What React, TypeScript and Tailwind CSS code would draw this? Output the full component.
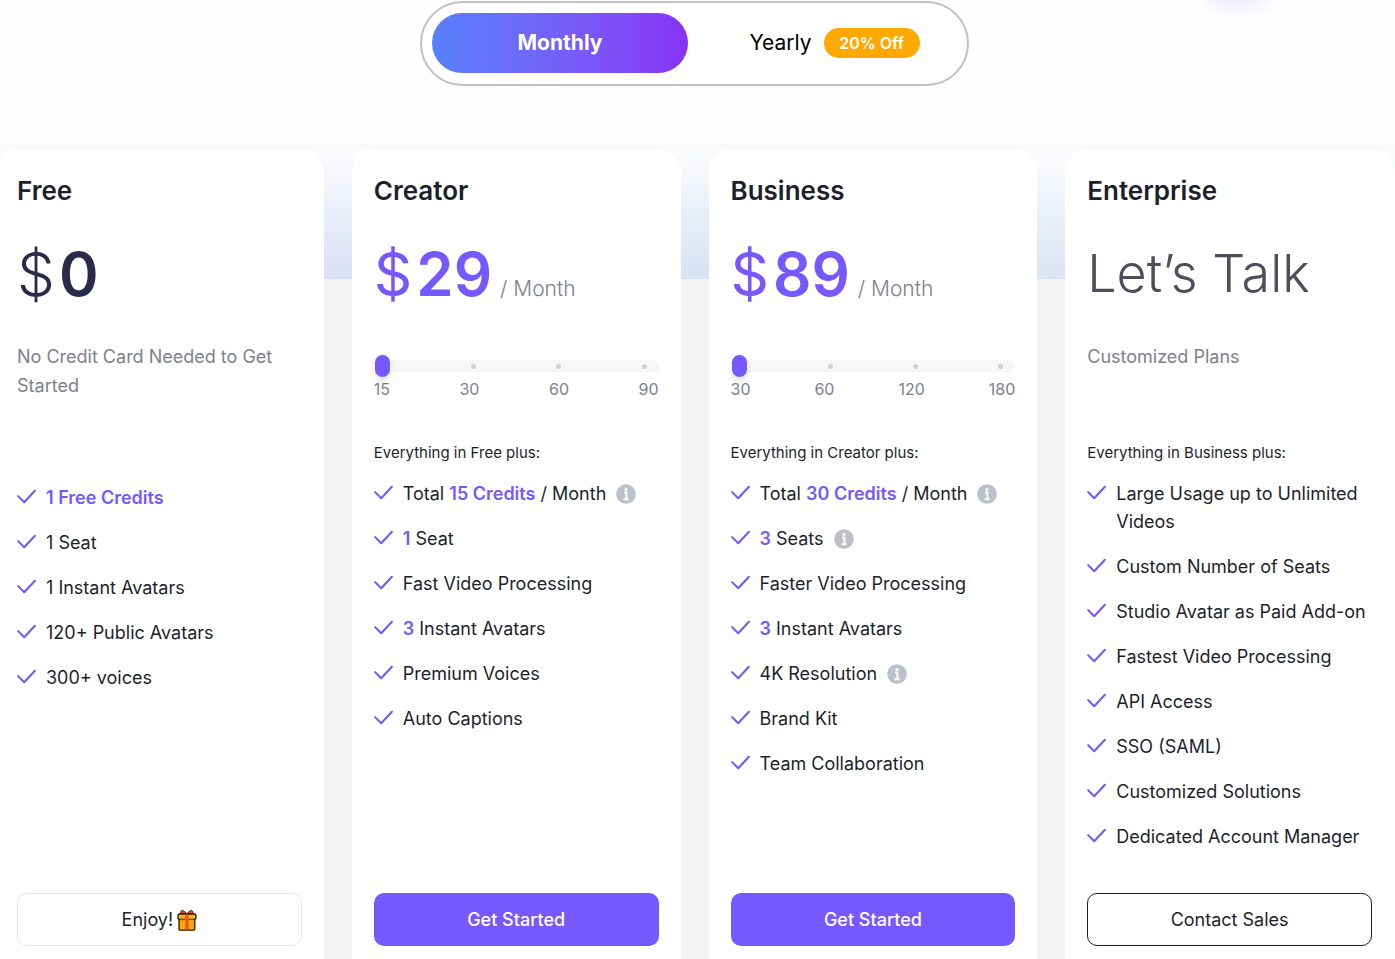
import { useState } from "react";
import type { ReactNode } from "react";

interface Plan {
  name: string;
  price: ReactNode;
  description?: string;
  slider?: { label: string; steps: number[] };
  listTitle?: string;
  features: { text: ReactNode; info?: boolean }[];
  action: ReactNode;
  actionClass: string;
}

const Accent = ({ children }: { children: ReactNode }) => (
  <span className="font-semibold text-[#7559ff]">{children}</span>
);

const CheckIcon = () => (
  <svg
    viewBox="0 0 20 20"
    className="mt-[3px] h-[19px] w-[19px] shrink-0"
    fill="none"
    stroke="#7559ff"
    strokeWidth="2.2"
    strokeLinecap="round"
    strokeLinejoin="round"
    aria-hidden="true"
  >
    <path d="M1.2 9.6 7.6 16 18.8 4" />
  </svg>
);

const InfoIcon = () => (
  <svg viewBox="0 0 20 20" className="h-5 w-5" aria-hidden="true">
    <circle cx="10" cy="10" r="9.8" fill="#bdc0ca" />
    <circle cx="10" cy="5.4" r="1.5" fill="#fff" />
    <path
      d="M8 8.4h2.4v6.4M7.6 15.2h5"
      stroke="#fff"
      strokeWidth="1.9"
      fill="none"
    />
  </svg>
);

const GiftIcon = () => (
  <svg viewBox="0 0 20 22" className="h-[22px] w-5" aria-hidden="true">
    <path
      d="M9.8 5.5C7.5 5.4 5 5 3.4 4.8 3.6 3 4.3 1.6 5.2 1.2 7 2 8.6 3.2 9.8 4.8 11 3.2 12.8 2 14.6 1.2c1 .6 1.6 2 1.7 3.6-2 .3-4.2.6-6.5.7Z"
      fill="#e8482c"
      stroke="#3b1d12"
      strokeWidth="1"
    />
    <rect x="2" y="9" width="15.8" height="12.2" rx="1" fill="#ffa70f" stroke="#26190a" strokeWidth="1.3" />
    <rect x="1" y="5" width="18" height="5.4" rx="1.6" fill="#ffb21c" stroke="#26190a" strokeWidth="1.3" />
    <path d="M3 11h13.8" stroke="#e48a00" strokeWidth="1" />
    <path d="M8.2 5.6h3.4v15H8.2z" fill="#ee5a24" />
  </svg>
);

const Price = ({ amount }: { amount: number }) => (
  <p className="flex items-baseline text-[#7559ff]">
    <span className="text-6xl">$</span>
    <span className="ml-1 text-6xl font-semibold">{amount}</span>
    <span className="ml-2 text-[21px] font-light text-[#7d818d]">/ Month</span>
  </p>
);

const plans: Plan[] = [
  {
    name: "Free",
    price: (
      <p className="flex items-baseline text-[#2a2b4a]">
        <span className="text-6xl font-light">$</span>
        <span className="ml-1 text-6xl font-semibold">0</span>
      </p>
    ),
    description: "No Credit Card Needed to Get Started",
    features: [
      { text: <Accent>1 Free Credits</Accent> },
      { text: "1 Seat" },
      { text: "1 Instant Avatars" },
      { text: "120+ Public Avatars" },
      { text: "300+ voices" },
    ],
    action: (
      <>
        Enjoy! <GiftIcon />
      </>
    ),
    actionClass: "border border-[#e8e8ea] bg-white text-[#1d1f2c]",
  },
  {
    name: "Creator",
    price: <Price amount={29} />,
    slider: { label: "Creator credits", steps: [15, 30, 60, 90] },
    listTitle: "Everything in Free plus:",
    features: [
      { text: <>Total <Accent>15 Credits</Accent> / Month</>, info: true },
      { text: <><Accent>1</Accent> Seat</> },
      { text: "Fast Video Processing" },
      { text: <><Accent>3</Accent> Instant Avatars</> },
      { text: "Premium Voices" },
      { text: "Auto Captions" },
    ],
    action: "Get Started",
    actionClass: "bg-[#7559ff] font-medium text-white",
  },
  {
    name: "Business",
    price: <Price amount={89} />,
    slider: { label: "Business credits", steps: [30, 60, 120, 180] },
    listTitle: "Everything in Creator plus:",
    features: [
      { text: <>Total <Accent>30 Credits</Accent> / Month</>, info: true },
      { text: <><Accent>3</Accent> Seats</>, info: true },
      { text: "Faster Video Processing" },
      { text: <><Accent>3</Accent> Instant Avatars</> },
      { text: "4K Resolution", info: true },
      { text: "Brand Kit" },
      { text: "Team Collaboration" },
    ],
    action: "Get Started",
    actionClass: "bg-[#7559ff] font-medium text-white",
  },
  {
    name: "Enterprise",
    price: <p className="text-[52px] font-light text-[#4d4f5c]">Let’s Talk</p>,
    description: "Customized Plans",
    listTitle: "Everything in Business plus:",
    features: [
      { text: "Large Usage up to Unlimited Videos" },
      { text: "Custom Number of Seats" },
      { text: "Studio Avatar as Paid Add-on" },
      { text: "Fastest Video Processing" },
      { text: "API Access" },
      { text: "SSO (SAML)" },
      { text: "Customized Solutions" },
      { text: "Dedicated Account Manager" },
    ],
    action: "Contact Sales",
    actionClass: "border border-[#1d1f2c] bg-white text-[#1d1f2c]",
  },
];

const CreditSlider = ({ label, steps }: { label: string; steps: number[] }) => {
  const [step, setStep] = useState(0);

  return (
    <div className="pt-3">
      <div className="relative flex h-6 items-center">
        <input
          type="range"
          aria-label={label}
          min={0}
          max={steps.length - 1}
          value={step}
          onChange={(e) => setStep(Number(e.target.value))}
          className="h-3 w-full cursor-pointer appearance-none rounded-full bg-[#f7f7f8] [&::-webkit-slider-thumb]:h-6 [&::-webkit-slider-thumb]:w-[17px] [&::-webkit-slider-thumb]:appearance-none [&::-webkit-slider-thumb]:rounded-full [&::-webkit-slider-thumb]:border [&::-webkit-slider-thumb]:border-white [&::-webkit-slider-thumb]:bg-[#7559ff] [&::-webkit-slider-thumb]:shadow-md"
        />
        <div className="pointer-events-none absolute inset-x-3 flex justify-between">
          {steps.map((value, index) => (
            <span
              key={value}
              className={`h-[5px] w-[5px] rounded-full ${
                index === step ? "bg-transparent" : "bg-[#d0d1d4]"
              }`}
            />
          ))}
        </div>
      </div>
      <div className="flex justify-between text-base leading-[22px] text-[#7d818d]">
        {steps.map((value) => (
          <span key={value}>{value}</span>
        ))}
      </div>
    </div>
  );
};

const PlanCard = ({ plan }: { plan: Plan }) => (
  <section className="flex flex-col rounded-t-3xl bg-white px-[22px] pt-[26px] pb-[13px]">
    <h2 className="text-[26px] leading-8 font-semibold text-[#1d1f2c]">
      {plan.name}
    </h2>
    <div className="mt-6 flex h-[86px] items-center whitespace-nowrap">
      {plan.price}
    </div>
    <div className="mt-[25px] h-[99px]">
      {plan.description && (
        <p className="text-lg leading-[29px] text-[#7d818d]">
          {plan.description}
        </p>
      )}
      {plan.slider && <CreditSlider {...plan.slider} />}
    </div>
    {plan.listTitle && (
      <p className="text-[15px] leading-6 text-[#1d1f2c]">{plan.listTitle}</p>
    )}
    <ul
      className={`mb-9 flex flex-col gap-[17px] text-lg leading-7 text-[#1d1f2c] ${
        plan.listTitle ? "mt-[15px]" : "mt-[43px]"
      }`}
    >
      {plan.features.map((feature, index) => (
        <li key={index} className="flex gap-[10px]">
          <CheckIcon />
          <span>{feature.text}</span>
          {feature.info && (
            <button type="button" aria-label="More information">
              <InfoIcon />
            </button>
          )}
        </li>
      ))}
    </ul>
    <button
      type="button"
      className={`mt-auto flex h-[53px] shrink-0 items-center justify-center gap-1 rounded-[10px] text-lg ${plan.actionClass}`}
    >
      {plan.action}
    </button>
  </section>
);

export default function App() {
  const [billing, setBilling] = useState("monthly");
  const active =
    "bg-linear-to-r from-[#5680fb] to-[#8730f5] font-bold text-white";

  return (
    <main className="flex min-h-screen flex-col overflow-hidden bg-[#fefeff] bg-[radial-gradient(ellipse_44px_24px_at_1238px_-4px,#efe8fc,transparent)] font-['Inter',sans-serif]">
      <div className="mr-px -ml-[5px] flex grow flex-col">
        <div className="mx-auto mt-px flex h-[85px] w-full max-w-[549px] items-center rounded-full border-2 border-[#bfc0c8] bg-white px-[10px] pb-px">
          <button
            type="button"
            aria-pressed={billing === "monthly"}
            onClick={() => setBilling("monthly")}
            className={`h-[60px] w-64 rounded-full text-[21px] ${
              billing === "monthly" ? active : "text-black"
            }`}
          >
            Monthly
          </button>
          <button
            type="button"
            aria-pressed={billing === "yearly"}
            onClick={() => setBilling("yearly")}
            className={`ml-6 flex h-[60px] grow items-center justify-center gap-3 rounded-full text-[21px] ${
              billing === "yearly" ? active : "text-black"
            }`}
          >
            Yearly
            <span className="flex h-[30px] w-24 items-center justify-center rounded-full bg-[#ffa900] text-base font-semibold text-white">
              20% Off
            </span>
          </button>
        </div>
        <div className="mt-[63px] grid grow grid-cols-4 gap-7 bg-[#f3f3f4] bg-[linear-gradient(to_bottom,#fcfcfd,#fcfcfd00),linear-gradient(to_right,#dcdef4,#d5e2f4_50%,#dce7f2)] bg-[length:100%_130px] bg-no-repeat shadow-[0_-4px_16px_rgba(0,0,0,0.03)]">
          {plans.map((plan) => (
            <PlanCard key={plan.name} plan={plan} />
          ))}
        </div>
      </div>
    </main>
  );
}
